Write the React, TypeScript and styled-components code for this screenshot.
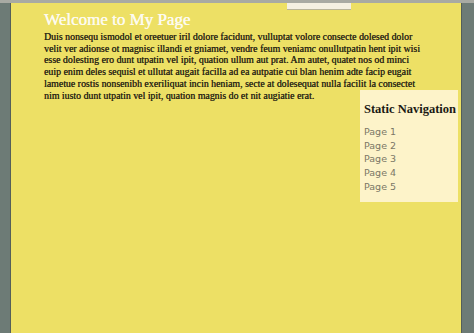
import React from "react";
import styled, { createGlobalStyle } from "styled-components";

const Global = createGlobalStyle`
  html, body { margin: 0; padding: 0; }
  body { width: 474px; height: 333px; overflow: hidden; background: #6e7c77; }
`;

const Screen = styled.div`
  position: relative;
  width: 474px;
  height: 333px;
  display: flex;
  flex-direction: column;
  background: #6e7c77;
`;

const TopBar = styled.div`
  height: 3px;
  background: #a8aaa3;
  flex: none;
`;

const Frame = styled.div`
  flex: 1;
  display: flex;
  min-height: 0;
`;

const Rail = styled.div<{ $w: number }>`
  width: ${(p) => p.$w}px;
  flex: none;
  background: #6d7b76;
  border-${(p) => (p.$w > 10 ? "left" : "right")}: 1px solid #545f59;
`;

const Page = styled.main`
  flex: 1;
  background: #ede065;
  padding: 7px 3px 0 33px;
  font-family: "Liberation Serif", "Times New Roman", serif;
`;

const Title = styled.h1`
  margin: 0 0 1px;
  font-size: 17px;
  font-weight: normal;
  line-height: 20px;
  color: #fdfbf0;
  text-shadow: 0.3px 0 0 #fdfbf0;
`;

const Body = styled.p`
  margin: 0;
  font-size: 9.85px;
  line-height: 11.7px;
  color: #2f2b17;
  font-weight: normal;
  text-shadow: 0.25px 0 0 #2f2b17;
  white-space: nowrap;
`;

const Nav = styled.nav`
  float: right;
  width: 98px;
  margin-top: -11px;
  background: #fdf3c9;
  padding: 11px 0 9px 4px;
  box-sizing: border-box;
`;

const NavTitle = styled.h2`
  margin: 0 0 8px;
  font-size: 12.5px;
  font-weight: bold;
  color: #1b1a14;
  line-height: 16px;
  white-space: nowrap;
`;

const NavList = styled.ul`
  list-style: none;
  margin: 0;
  padding: 0;
`;

const NavItem = styled.li`
  font-family: "DejaVu Sans", Verdana, sans-serif;
  font-size: 9.5px;
  line-height: 13.6px;
  color: #7b7766;
`;

const Tab = styled.div`
  position: absolute;
  top: 3px;
  left: 287px;
  width: 64px;
  height: 6px;
  background: #f4f0e2;
  border-bottom: 1px solid #b8b49a;
`;

const lines = [
  "Duis nonsequ ismodol et oreetuer iril dolore facidunt, vulluptat volore consecte dolesed dolor",
  "velit ver adionse ot magnisc illandi et gniamet, vendre feum veniamc onullutpatin hent ipit wisi",
  "esse dolesting ero dunt utpatin vel ipit, quation ullum aut prat. Am autet, quatet nos od minci",
  "euip enim deles sequisl et ullutat augait facilla ad ea autpatie cui blan henim adte facip eugait",
  "lametue rostis nonsenibh exeriliquat incin heniam, secte at dolesequat nulla facilit la consectet",
  "nim iusto dunt utpatin vel ipit, quation magnis do et nit augiatie erat.",
];

export default function App() {
  return (
    <>
      <Global />
      <Screen>
        <TopBar />
        <Frame>
          <Rail $w={10} />
          <Page>
            <Title>Welcome to My Page</Title>
            <Body>
              {lines.map((l, i) => (
                <React.Fragment key={i}>
                  {l}
                  {i < lines.length - 1 && <br />}
                </React.Fragment>
              ))}
            </Body>
            <Nav>
              <NavTitle>Static Navigation</NavTitle>
              <NavList>
                {[1, 2, 3, 4, 5].map((n) => (
                  <NavItem key={n}>Page {n}</NavItem>
                ))}
              </NavList>
            </Nav>
          </Page>
          <Rail $w={12} />
        </Frame>
        <Tab />
      </Screen>
    </>
  );
}
